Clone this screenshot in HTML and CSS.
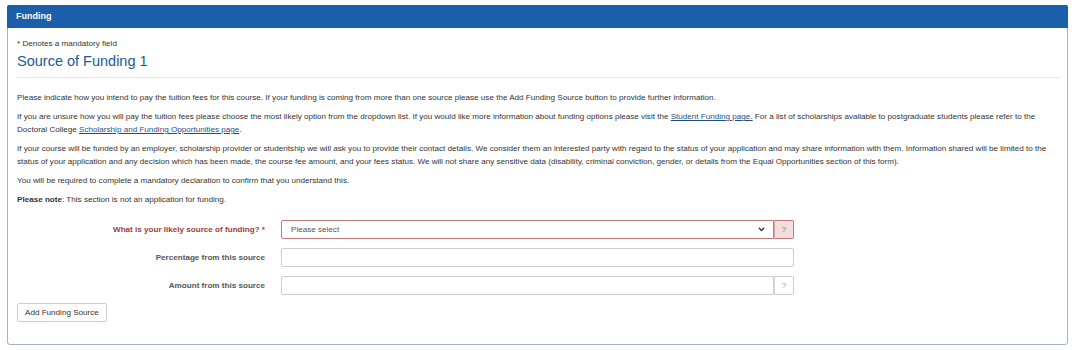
FILE: index.html
```html
<!DOCTYPE html>
<html lang="en">
<head>
    <meta charset="UTF-8">
    <title>Funding</title>
    <link rel="stylesheet" href="styles.css">
</head>
<body>
    <div class="panel">
        <div class="panel-heading">Funding</div>
        <div class="panel-body">
            <p class="mandatory">* Denotes a mandatory field</p>
            <h2>Source of Funding 1</h2>

            <p>Please indicate how you intend to pay the tuition fees for this course. If your funding is coming from more than one source please use the Add Funding Source button to provide further information.</p>
            <p>If you are unsure how you will pay the tuition fees please choose the most likely option from the dropdown list. If you would like more information about funding options please visit the <a href="#">Student Funding page.</a> For a list of scholarships available to postgraduate students please refer to the Doctoral College <a href="#">Scholarship and Funding Opportunities page</a>.</p>
            <p>If your course will be funded by an employer, scholarship provider or studentship we will ask you to provide their contact details. We consider them an interested party with regard to the status of your application and may share information with them. Information shared will be limited to the status of your application and any decision which has been made, the course fee amount, and your fees status. We will not share any sensitive data (disability, criminal conviction, gender, or details from the Equal Opportunities section of this form).</p>
            <p>You will be required to complete a mandatory declaration to confirm that you understand this.</p>
            <p><strong>Please note</strong>: This section is not an application for funding.</p>

            <div class="form-row has-error">
                <label class="control-label">What is your likely source of funding? *</label>
                <div class="input-group">
                    <div class="form-control select">
                        <span>Please select</span>
                        <svg width="7" height="5" viewBox="0 0 7 5"><path d="M0.8 0.8l2.7 2.7 2.7-2.7" fill="none" stroke="#333" stroke-width="1.3"/></svg>
                    </div>
                    <span class="addon">?</span>
                </div>
            </div>
            <div class="form-row">
                <label class="control-label">Percentage from this source</label>
                <div class="input-group">
                    <input type="text" class="form-control">
                </div>
            </div>
            <div class="form-row">
                <label class="control-label">Amount from this source</label>
                <div class="input-group">
                    <input type="text" class="form-control">
                    <span class="addon">?</span>
                </div>
            </div>

            <button class="btn">Add Funding Source</button>
        </div>
    </div>
</body>
</html>
```

FILE: styles.css
```css
* {
    box-sizing: border-box;
}

body {
    margin: 0;
    padding: 5px 12px 0 7px;
    font-family: "Liberation Sans", Arial, sans-serif;
    font-size: 8.1px;
    color: #333;
    background: #fff;
}

.panel {
    border: 1px solid #9fb3d1;
    border-radius: 3px;
    height: 340px;
}

.panel-heading {
    height: 23px;
    padding: 0 9px;
    line-height: 22px;
    font-size: 9px;
    font-weight: bold;
    color: #fff;
    background: #1b5ea9;
    border-radius: 2px 2px 0 0;
    margin: -1px -1px 0;
}

.panel-body {
    padding: 9px 8px 0 9px;
}

p {
    margin: 0 0 6px;
    line-height: 13px;
}

.mandatory {
    margin-bottom: 2px;
}

h2 {
    margin: 0 0 13px;
    padding-bottom: 7px;
    font-size: 14.5px;
    font-weight: normal;
    line-height: 18px;
    color: #215a93;
    border-bottom: 1px solid #e6e6e6;
}

a {
    color: #1d4f86;
}

.form-row {
    display: flex;
    align-items: center;
    margin-top: 9px;
}

.has-error {
    margin-top: 14px;
}

.control-label {
    flex: none;
    width: 248px;
    text-align: right;
    font-weight: bold;
    color: #555;
}

.has-error .control-label {
    color: #a4393a;
}

.input-group {
    flex: none;
    display: flex;
    width: 513px;
    height: 19px;
    margin-left: 16px;
}

.form-control {
    flex: 1;
    min-width: 0;
    height: 19px;
    margin: 0;
    padding: 0 9px;
    font: inherit;
    border: 1px solid #ccc;
    border-radius: 2px;
    background: #fff;
}

.select {
    display: flex;
    align-items: center;
    justify-content: space-between;
    color: #555;
    padding-right: 8px;
}

.has-error .form-control {
    border-color: #c27a7c;
}

.input-group .form-control:not(:last-child) {
    border-radius: 2px 0 0 2px;
}

.addon {
    flex: none;
    width: 20px;
    height: 19px;
    line-height: 17px;
    text-align: center;
    color: #999;
    border: 1px solid #ccc;
    border-left: 1px solid #ddd;
    border-radius: 0 2px 2px 0;
}

.has-error .addon {
    background: #f2dede;
    border-color: #c27a7c;
    border-left-color: #d9a3a4;
    color: #b06566;
}

.btn {
    margin-top: 8px;
    height: 19px;
    padding: 0 7px;
    font: inherit;
    color: #333;
    background: #fff;
    border: 1px solid #ccc;
    border-radius: 2px;
}
```
